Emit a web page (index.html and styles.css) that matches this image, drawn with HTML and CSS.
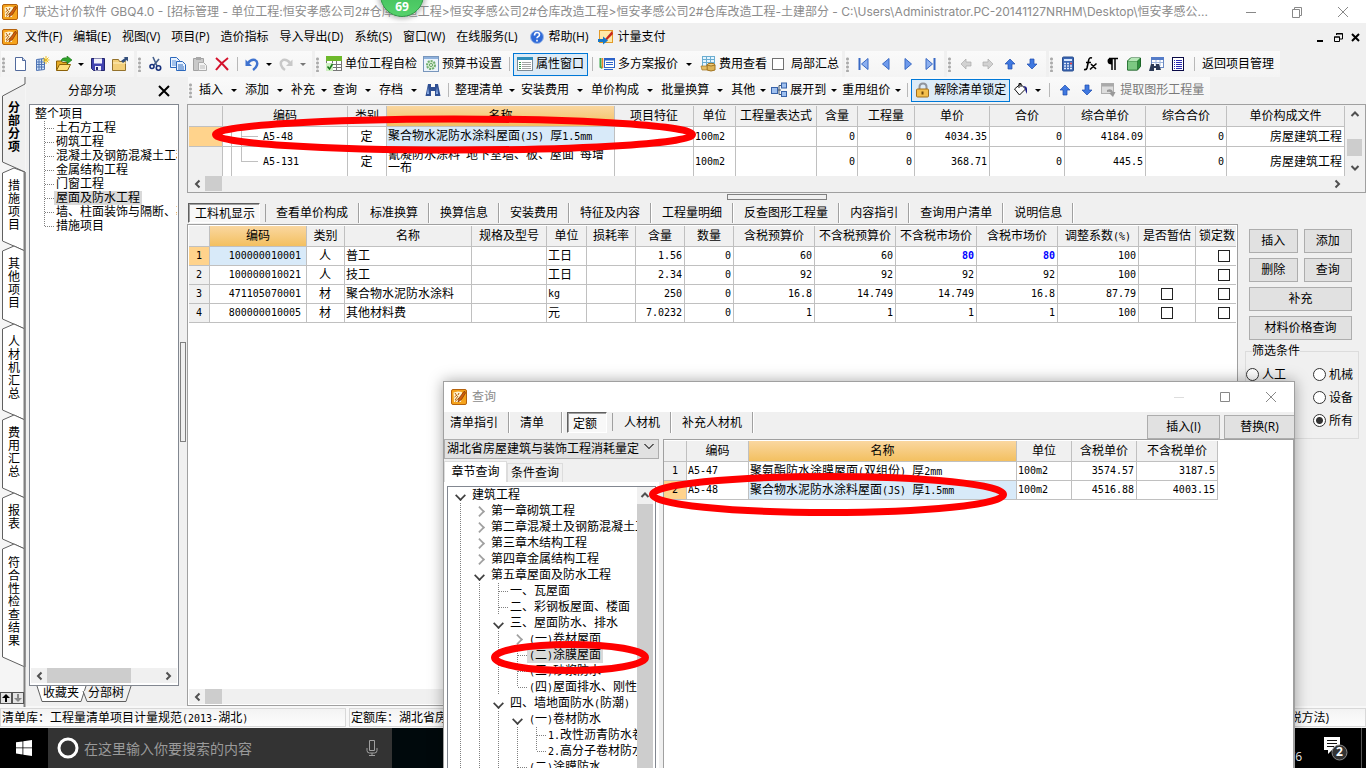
FILE: index.html
```html
<!DOCTYPE html>
<html lang="zh-CN">
<head>
<meta charset="utf-8">
<title>广联达计价软件 GBQ4.0</title>
<link rel="stylesheet" href="styles.css">
</head>
<body>
<svg class="defs" aria-hidden="true">
  <symbol id="app" viewBox="0 0 16 16"><rect x="0.5" y="0.5" width="15" height="15" rx="1.5" fill="#f5a31c" stroke="#b5620c"/><path d="M2.500 3.500L7 2.500l4 .5-1 10H3z" fill="#fff3d0"/><path d="M4 4l2 3M3.500 8L6 6M4 11l3-4M8 4l-1 2M4 12.500L8 9" stroke="#b5620c" stroke-width="1"/><path d="M13.500 2L8 9l-1 4 3.500-2.500L14.500 4z" fill="#d2600c" stroke="#7c3206" stroke-width="0.7"/></symbol>
  <symbol id="up" viewBox="0 0 16 16"><path d="M8 3l5 5H10v5H6V8H3z" fill="#3f78e0" stroke="#1d4cae" stroke-width="0.7"/></symbol>
  <symbol id="down" viewBox="0 0 16 16"><path d="M8 13l5-5H10V3H6v5H3z" fill="#3f78e0" stroke="#1d4cae" stroke-width="0.7"/></symbol>
  <symbol id="left" viewBox="0 0 16 16"><path d="M10.500 4.500L7 8l3.500 3.500" fill="none" stroke="#505050" stroke-width="2"/></symbol>
  <symbol id="right" viewBox="0 0 16 16"><path d="M5.500 4.500L9 8l-3.500 3.500" fill="none" stroke="#505050" stroke-width="2"/></symbol>
  <symbol id="vup" viewBox="0 0 16 16"><path d="M4.500 10L8 6.500l3.500 3.500" fill="none" stroke="#505050" stroke-width="2"/></symbol>
  <symbol id="vdown" viewBox="0 0 16 16"><path d="M4.500 6L8 9.500 11.500 6" fill="none" stroke="#505050" stroke-width="2"/></symbol>
</svg>

<header class="titlebar">
  <svg class="ic"><use href="#app"/></svg>
  <h1>广联达计价软件 GBQ4.0 - [招标管理 - 单位工程:恒安孝感公司2#仓库改造工程&gt;恒安孝感公司2#仓库改造工程&gt;恒安孝感公司2#仓库改造工程-土建部分 - C:\Users\Administrator.PC-20141127NRHM\Desktop\恒安孝感公...</h1>
  <div class="winbtns">
    <button aria-label="最小化"><svg class="ic" viewBox="0 0 16 16"><path d="M3 8.500h10" stroke="#888"/></svg></button>
    <button aria-label="还原"><svg class="ic" viewBox="0 0 16 16"><path d="M3.500 5.500h7v8h-7zM5.500 5.500v-2h7v8h-2" fill="none" stroke="#888"/></svg></button>
    <button aria-label="关闭"><svg class="ic" viewBox="0 0 16 16"><path d="M3 3l10 10M13 3L3 13" stroke="#888"/></svg></button>
  </div>
</header>

<nav class="menubar">
  <svg class="ic"><use href="#app"/></svg>
  <button>文件(F)</button><button>编辑(E)</button><button>视图(V)</button><button>项目(P)</button><button>造价指标</button><button>导入导出(D)</button><button>系统(S)</button><button>窗口(W)</button><button>在线服务(L)</button>
  <button class="lead"><svg class="ic" viewBox="0 0 16 16"><circle cx="8" cy="8" r="6.500" fill="#2f6ad8" stroke="#9db9e8"/><path d="M5.500 6.500q0-3 2.500-3t2.500 2.200q0 1.300-1.500 2-1 .5-1 1.600M8 10.800v1.800" fill="none" stroke="#fff" stroke-width="1.600"/></svg>帮助(H)</button>
  <button class="lead"><svg class="ic" viewBox="0 0 16 16"><rect x="1.500" y="1.500" width="13" height="12" fill="#ffe9a8" stroke="#e29a28"/><path d="M14 2L8 9l-2 3 3-1 6-6z" fill="#c8281c"/><path d="M0 10h5V7.500l5 4-5 4V13H0z" fill="#1878c8"/></svg>计量支付</button>
  <div class="mdi">
    <button aria-label="最小化子窗口"><svg class="ic" viewBox="0 0 16 16"><path d="M5 12h6" stroke="#000" stroke-width="2"/></svg></button>
    <button aria-label="还原子窗口"><svg class="ic" viewBox="0 0 16 16"><path d="M4.500 8v4.500h5V8zM6.500 6V4.500h6V10H10M4 8h6M6 5h7" fill="none" stroke="#000"/></svg></button>
    <button aria-label="关闭子窗口"><svg class="ic" viewBox="0 0 16 16"><path d="M4 5l7 7M11 5l-7 7" stroke="#000" stroke-width="2"/></svg></button>
  </div>
</nav>

<div class="toolrow">
  <div class="group">
    <i class="grip"></i>
    <button class="tb" aria-label="新建"><svg class="ic" viewBox="0 0 16 16"><path d="M3.500 1.500h7l3 3v10h-10z" fill="#fff" stroke="#526a9c"/><path d="M10.500 1.500v3h3" fill="#c7d8f2" stroke="#526a9c"/></svg></button>
    <button class="tb" aria-label="新建项目"><svg class="ic" viewBox="0 0 16 16"><path d="M2.500 3.500l8-1v11l-8 1z" fill="#cfe3fa" stroke="#4f74b4"/><path d="M3 6h7M3 8.500h7M3 11h7M5 3v11M7.500 3v11" stroke="#4f74b4"/><path d="M12 0v8M8.500 4h7M9.500 1.500l5 5M14.500 1.500l-5 5" stroke="#eec01c"/></svg></button>
    <button class="tb" aria-label="打开"><svg class="ic" viewBox="0 0 16 16"><path d="M.5 14V5h5l1 1.500h5V14z" fill="#e5ab26" stroke="#8c6108"/><path d="M.5 14.500L3.500 8.500h11l-3 6z" fill="#ffdf7a" stroke="#8c6108"/><path d="M5 5q1-4 6-3V0l5 4-5 4V5.500q-4-1-6-.5z" fill="#31a52c" stroke="#187016" stroke-width=".6"/></svg></button>
    <i class="caret"></i>
    <button class="tb" aria-label="保存"><svg class="ic" viewBox="0 0 16 16"><path d="M1.500 2.500h13v12h-11l-2-2z" fill="#4244b0" stroke="#22246c"/><path d="M4 2.500h8v5H4zM5 10h6v4.500H5z" fill="#f2f2fb"/><path d="M6 11h2v3H6z" fill="#22246c"/></svg></button>
    <button class="tb" aria-label="文件夹"><svg class="ic" viewBox="0 0 16 16"><path d="M.5 14.500V3.500h6l1 2h6v9z" fill="#f2cf7a" stroke="#94722c"/><path d="M1 7h13" stroke="#fff0c0"/><path d="M9 5l4-3-1.500-1H16v4.500L14.500 4 11 7z" fill="#34507c"/></svg></button>
  </div>
  <div class="group">
    <i class="grip"></i>
    <button class="tb" aria-label="剪切"><svg class="ic" viewBox="0 0 16 16"><path d="M5 1l4 9M11 3l-5 6" stroke="#46608c" stroke-width="1.600"/><circle cx="4" cy="10.500" r="2" fill="none" stroke="#16307c" stroke-width="1.600"/><circle cx="10.500" cy="12" r="2.200" fill="none" stroke="#16307c" stroke-width="1.600"/></svg></button>
    <button class="tb" aria-label="复制"><svg class="ic" viewBox="0 0 16 16"><path d="M.5 1.500h6l3 3v7h-9z" fill="#e8f2ff" stroke="#2c68bc"/><path d="M2 5h4M2 7h4M2 9h4" stroke="#5d92d8"/><path d="M6.500 5.500h6l3 3v6h-9z" fill="#e8f2ff" stroke="#2c68bc"/><path d="M8 9h5M8 11h6M8 13h6" stroke="#2c68bc"/></svg></button>
    <button class="tb" aria-label="粘贴"><svg class="ic" viewBox="0 0 16 16"><path d="M1.500 2.500h10v12h-10z" fill="#c9c9c9" stroke="#a2a2a2"/><path d="M4 1h5v3H4z" fill="#a8a8a8"/><path d="M6.500 6.500h5l3 3v5h-8z" fill="#f3f3f3" stroke="#acacac"/><path d="M8 10h5M8 12h5" stroke="#bbb"/></svg></button>
    <button class="tb" aria-label="删除"><svg class="ic" viewBox="0 0 16 16"><path d="M2 2q6 5 12 12M14 2Q7 7 2 14" fill="none" stroke="#d4122c" stroke-width="2"/></svg></button>
    <i class="sep"></i>
    <button class="tb" aria-label="撤销"><svg class="ic" viewBox="0 0 16 16"><path d="M4 7q3-4 7-3 3 1.500 2 5-1 3-4 5" fill="none" stroke="#3f73cf" stroke-width="2.400"/><path d="M1.500 3.500V10H8z" fill="#3f73cf"/></svg></button>
    <i class="caret"></i>
    <button class="tb" aria-label="重做"><svg class="ic" viewBox="0 0 16 16"><path d="M12 7Q9 3 5 4 2 5.500 3 9q1 3 4 5" fill="none" stroke="#c8c8c8" stroke-width="2.400"/><path d="M14.500 3.500V10H8z" fill="#c8c8c8"/></svg></button>
    <i class="caret dim"></i>
  </div>
  <div class="group">
    <i class="grip"></i>
    <button class="tb txt"><svg class="ic" viewBox="0 0 16 16"><rect x=".5" y="1.500" width="15" height="13" fill="#fff" stroke="#777"/><rect width="16" height="5" fill="#6eb92b"/><path d="M1 8.500h14M1 11.500h14M6.500 5v9M10.500 5v9" stroke="#777"/><path d="M0 7h7v8H0z" fill="#cdeec0"/><path d="M1.500 10.500l2 2.500 3-5" fill="none" stroke="#167a18" stroke-width="1.500"/></svg>单位工程自检</button>
    <button class="tb txt"><svg class="ic" viewBox="0 0 16 16"><rect x=".5" y=".5" width="15" height="15" fill="#ecf3fb" stroke="#7896bc"/><path d="M1 2h14" stroke="#8eb1dc" stroke-width="2"/><circle cx="8" cy="9" r="4" fill="#d5ecd0" stroke="#6fae6f" stroke-width="2" stroke-dasharray="2 1"/><circle cx="8" cy="9" r="1.500" fill="#fff" stroke="#5c9e5c"/></svg>预算书设置</button>
    <i class="sep"></i>
    <button class="tb txt on"><svg class="ic" viewBox="0 0 16 16"><rect x=".5" y="1.500" width="15" height="13" fill="#fff" stroke="#7a8a96"/><rect y="1" width="16" height="3" fill="#2e8dbb"/><path d="M2 6.500h2M2 8.500h2M2 10.500h2M2 12.500h2" stroke="#39964d"/><path d="M5 6.500h9M5 8.500h9M5 10.500h9M5 12.500h9" stroke="#a3a3a3"/></svg>属性窗口</button>
    <i class="sep"></i>
    <button class="tb txt"><svg class="ic" viewBox="0 0 16 16"><path d="M1.500 2v9l2 1" fill="none" stroke="#3aa84a" stroke-width="2"/><path d="M3.500 2v10" stroke="#e9852c" stroke-width="1.500"/><rect x="5.500" y="2.500" width="10" height="9" fill="#fff" stroke="#2c62c8"/><path d="M5.500 3.500h10" stroke="#2c62c8" stroke-width="2"/><path d="M7 6.500h7M7 8.500h7M5 13.500h9" stroke="#2c62c8"/></svg>多方案报价</button>
    <i class="caret wide"></i>
    <button class="tb txt"><svg class="ic" viewBox="0 0 16 16"><rect x="2.500" y=".5" width="12" height="10" fill="#e5f5ff" stroke="#6badd0"/><path d="M3 3.500h11M3 6.500h11M6.500 1v9M10.500 1v9" stroke="#6badd0"/><ellipse cx="11" cy="9" rx="4" ry="1.700" fill="#f1cf7e" stroke="#a27420"/><path d="M7 9v5q4 2 8 0V9q-4 2-8 0" fill="#ddb457" stroke="#a27420"/><path d="M1 10h6v4H2z" fill="#e4bd65" stroke="#a27420" stroke-width=".7"/></svg>费用查看</button>
    <label class="chk"><input type="checkbox">局部汇总</label>
  </div>
  <div class="group">
    <i class="grip"></i>
    <button class="tb" aria-label="首条"><svg class="ic" viewBox="0 0 16 16"><path d="M3.500 2v12" stroke="#3869c4" stroke-width="2"/><path d="M12 2.500v11L5.500 8z" fill="#8db0ef" stroke="#3869c4"/></svg></button>
    <button class="tb" aria-label="上一条"><svg class="ic" viewBox="0 0 16 16"><path d="M11 2.500v11L4.500 8z" fill="#6f9bec" stroke="#3869c4"/></svg></button>
    <button class="tb" aria-label="下一条"><svg class="ic" viewBox="0 0 16 16"><path d="M5 2.500v11L11.500 8z" fill="#6f9bec" stroke="#3869c4"/></svg></button>
    <button class="tb" aria-label="末条"><svg class="ic" viewBox="0 0 16 16"><path d="M12.500 2v12" stroke="#3869c4" stroke-width="2"/><path d="M4 2.500v11L10.500 8z" fill="#8db0ef" stroke="#3869c4"/></svg></button>
  </div>
  <div class="group">
    <i class="grip"></i>
    <button class="tb" aria-label="左移"><svg class="ic" viewBox="0 0 16 16"><path d="M3 8l5-5v3h5v4H8v3z" fill="#d2d2d2" stroke="#aaa" stroke-width=".7"/></svg></button>
    <button class="tb" aria-label="右移"><svg class="ic" viewBox="0 0 16 16"><path d="M13 8L8 3v3H3v4h5v3z" fill="#d2d2d2" stroke="#aaa" stroke-width=".7"/></svg></button>
    <button class="tb" aria-label="上移"><svg class="ic"><use href="#up"/></svg></button>
    <button class="tb" aria-label="下移"><svg class="ic"><use href="#down"/></svg></button>
  </div>
  <div class="group">
    <i class="grip"></i>
    <button class="tb" aria-label="计算器"><svg class="ic" viewBox="0 0 16 16"><rect x="2.500" y="1" width="11" height="14" rx="1" fill="#3c67b4" stroke="#294e90"/><path d="M4 4h8" stroke="#d7e8ff" stroke-width="2"/><path d="M4 7.500h8M4 10h8M4 12.500h8" stroke="#dfe9fa" stroke-width="1.500" stroke-dasharray="2 1"/><path d="M10 7.500h2" stroke="#e44" stroke-width="1.500"/></svg></button>
    <button class="tb" aria-label="函数"><svg class="ic" viewBox="0 0 16 16"><path d="M10 2q-3-1-3.500 3L5 12q-.5 2-3 1.500M4 6.500h5M9 8l5 5M14.500 7.500L8 13.500" fill="none" stroke="#000" stroke-width="1.600"/></svg></button>
    <button class="tb" aria-label="段落"><svg class="ic" viewBox="0 0 16 16"><path d="M8 2v12M11 2v12M5 2.500h9" stroke="#000" stroke-width="1.500"/><path d="M8 2Q3.500 1.500 3.500 5T8 8.500z"/></svg></button>
    <button class="tb" aria-label="三维"><svg class="ic" viewBox="0 0 16 16"><path d="M1.500 5l3-3h10v8.500l-3 3.500h-10z" fill="#2e8f3c" stroke="#1b6426"/><path d="M1.500 5h10v9h-10z" fill="#7cc882" stroke="#1b6426" stroke-width=".6"/><path d="M2 5l3-3h9l-3 3z" fill="#b7e6b8"/></svg></button>
    <button class="tb" aria-label="查找表"><svg class="ic" viewBox="0 0 16 16"><rect x="3.500" y="1.500" width="12" height="10" fill="#fff" stroke="#6a89c2"/><path d="M3 2.500h13" stroke="#557cc8" stroke-width="3"/><path d="M4 6.500h11M8 4v6M12 4v6" stroke="#a0b6dc"/><path d="M3 8h3v2h2V8h3l2 6H8v-2H6v3H1z" fill="#2c3a56"/></svg></button>
    <button class="tb" aria-label="清单"><svg class="ic" viewBox="0 0 16 16"><rect x="2.500" y="1.500" width="11" height="13" fill="#fff" stroke="#0a0a46"/><path d="M4 4.500h1M4 6.500h1M4 8.500h1M4 10.500h1M4 12.500h1M6 4.500h6M6 6.500h6M6 8.500h6M6 10.500h6M6 12.500h6" stroke="#2a2ab0"/></svg></button>
    <i class="sep wide"></i>
    <button class="tb txt">返回项目管理</button>
  </div>
</div>

<div class="main">
  <nav class="vtabs">
    <svg class="vline" viewBox="0 0 26 630" aria-hidden="true">
      <path d="M24.500 0V7L2.500 19V85L24.500 95V629H0V0z" fill="#f5f5f5"/>
      <g fill="#fff" stroke="#606060">
        <path d="M25 95L14 91 2.500 96V164L25 174z"/><path d="M25 174L14 169 2.500 174V242L25 252z"/><path d="M25 252L14 247 2.500 252V333L25 343z"/><path d="M25 343L14 338 2.500 343V411L25 421z"/><path d="M25 421L14 416 2.500 421V462L25 472z"/><path d="M25 472L14 467 2.500 472V580L25 590z"/>
      </g>
      <path d="M25 0V7L2.500 19V85L25 95" fill="#f0f0f0" stroke="#606060"/>
      <path d="M24.500 95V630" stroke="#808080" stroke-width="2"/>
    </svg>
    <button class="cur">分<br>部<br>分<br>项</button>
    <button>措<br>施<br>项<br>目</button>
    <button>其<br>他<br>项<br>目</button>
    <button>人<br>材<br>机<br>汇<br>总</button>
    <button>费<br>用<br>汇<br>总</button>
    <button>报<br>表</button>
    <button>符<br>合<br>性<br>检<br>查<br>结<br>果</button>
    <div class="vscr">
      <button aria-label="上"><svg viewBox="0 0 10 10"><path d="M5 1l4 4H6v4H4V5H1z" fill="#000"/></svg></button>
      <button aria-label="下"><svg viewBox="0 0 10 10"><path d="M5 9l4-4H6V1H4v4H1z" fill="#888"/></svg></button>
    </div>
  </nav>

  <aside class="side">
    <div class="sidehead"><h2>分部分项</h2><button aria-label="关闭面板"><svg class="ic" viewBox="0 0 16 16"><path d="M3 3l10 10M13 3L3 13" stroke="#000" stroke-width="2"/></svg></button></div>
    <div class="treebox">
      <ul class="tree small">
        <li>整个项目</li>
        <li><i class="br"></i><span>土石方工程</span></li>
        <li><i class="br"></i><span>砌筑工程</span></li>
        <li><i class="br"></i><span>混凝土及钢筋混凝土工程</span></li>
        <li><i class="br"></i><span>金属结构工程</span></li>
        <li><i class="br"></i><span>门窗工程</span></li>
        <li><i class="br"></i><span class="sel">屋面及防水工程</span></li>
        <li><i class="br"></i><span>墙、柱面装饰与隔断、幕墙</span></li>
        <li><i class="br end"></i><span>措施项目</span></li>
      </ul>
      <div class="hscroll"><svg class="ic"><use href="#left"/></svg><i class="thumb long"></i><svg class="ic"><use href="#right"/></svg></div>
    </div>
    <div class="btabs">
      <svg viewBox="0 0 110 17" aria-hidden="true"><path d="M8 0l5 15.500H52L57 0" fill="#fff" stroke="#606060"/><path d="M54 5l4 10.500H97L102 0" fill="#f0f0f0" stroke="#606060"/></svg>
      <button>收藏夹</button><button>分部树</button>
    </div>
  </aside>
  <div class="split"><i></i></div>

  <main class="work">
    <div class="toolrow">
      <div class="group">
        <i class="grip"></i>
        <button class="tb txt">插入</button><i class="caret wide"></i>
        <button class="tb txt">添加</button><i class="caret wide"></i>
        <button class="tb txt">补充</button><i class="caret"></i>
        <button class="tb txt">查询</button><i class="caret wide"></i>
        <button class="tb txt">存档</button><i class="caret wide"></i>
        <button class="tb" aria-label="查找"><svg class="ic" viewBox="0 0 16 16"><path d="M3 2h3v3h4V2h3l2.500 12h-5.500V9H6v5H.5z" fill="#2f4f92"/><path d="M3 5L2 12h2zM12 5l-1 7h2z" fill="#8fb2ea"/></svg></button>
        <i class="sep"></i>
        <button class="tb txt">整理清单</button><i class="caret"></i>
        <button class="tb txt">安装费用</button><i class="caret wide"></i>
        <button class="tb txt">单价构成</button><i class="caret wide"></i>
        <button class="tb txt">批量换算</button><i class="caret wide"></i>
        <button class="tb txt">其他</button><i class="caret slim"></i>
        <button class="tb txt"><svg class="ic" viewBox="0 0 16 16"><path d="M6 8h4M8 3.500v9M8 3.500h3M8 12.500h3" fill="none" stroke="#456"/><rect x=".5" y="5.500" width="6" height="6" fill="#9fc0ef" stroke="#3762a8"/><rect x="10.500" y="1" width="5" height="5" fill="#9fc0ef" stroke="#3762a8"/><rect x="10.500" y="9.500" width="5" height="5" fill="#9fc0ef" stroke="#3762a8"/></svg>展开到</button><i class="caret slim"></i>
        <button class="tb txt">重用组价</button><i class="caret slim"></i>
        <i class="sep"></i>
        <button class="tb txt on"><svg class="ic" viewBox="0 0 16 16"><path d="M4.500 8V5q0-3.500 3.500-3.500T11.500 5v3" fill="none" stroke="#8f949c" stroke-width="2"/><rect x="1.500" y="7" width="12" height="8" rx="1" fill="#f4bf4c" stroke="#a2701c"/><path d="M7.500 9.500v3" stroke="#6d4609" stroke-width="2"/></svg>解除清单锁定</button>
        <button class="tb" aria-label="填充"><svg class="ic" viewBox="0 0 16 16"><path d="M1.500 7l6-5 5 5-6 6z" fill="#fff" stroke="#111"/><path d="M6 6V1.500h2V5" fill="none" stroke="#111"/><path d="M10 4q4 0 4 3v5q-2-3-2-6z" fill="#1c1c88"/></svg></button><i class="caret"></i>
        <i class="sep wide"></i>
        <button class="tb" aria-label="上移"><svg class="ic"><use href="#up"/></svg></button>
        <button class="tb" aria-label="下移"><svg class="ic"><use href="#down"/></svg></button>
        <button class="tb txt dim"><svg class="ic" viewBox="0 0 16 16"><rect x=".5" y="1.500" width="12" height="10" fill="#ddd" stroke="#b0b0b0"/><path d="M1 3h12" stroke="#aaa" stroke-width="3"/><path d="M6 8q5-2 6 2h2.500L12 15 8 11h2q-1-2-4-1z" fill="#999"/></svg>提取图形工程量</button>
      </div>
    </div>

    <section class="gridbox top">
      <div class="scrollpair">
        <table class="grid t1">
          <colgroup><col><col><col><col><col><col><col><col><col><col><col><col><col><col></colgroup>
          <thead><tr><th></th><th>编码</th><th>类别</th><th class="hot">名称</th><th>项目特征</th><th>单位</th><th>工程量表达式</th><th>含量</th><th>工程量</th><th>单价</th><th>合价</th><th>综合单价</th><th>综合合价</th><th>单价构成文件</th></tr></thead>
          <tbody>
            <tr><th class="cur"></th><td class="m code">A5-48</td><td class="c">定</td><td class="pick">聚合物水泥防水涂料屋面<span class="m">(JS) </span>厚<span class="m">1.5mm</span></td><td></td><td class="m">100m2</td><td></td><td class="m r">0</td><td class="m r">0</td><td class="m r">4034.35</td><td class="m r">0</td><td class="m r">4184.09</td><td class="m r">0</td><td class="r">房屋建筑工程</td></tr>
            <tr class="tall"><th></th><td class="m code end">A5-131</td><td class="c">定</td><td>氰凝防水涂料<span class="m"> </span>地下室墙、板、屋面<span class="m"> </span>每增一布</td><td></td><td class="m">100m2</td><td></td><td class="m r">0</td><td class="m r">0</td><td class="m r">368.71</td><td class="m r">0</td><td class="m r">445.5</td><td class="m r">0</td><td class="r">房屋建筑工程</td></tr>
          </tbody>
        </table>
        <div class="vscroll"><svg class="ic"><use href="#vup"/></svg><i></i><svg class="ic"><use href="#vdown"/></svg></div>
      </div>
      <div class="hscroll far"><svg class="ic"><use href="#left"/></svg><i class="thumb"></i><svg class="ic"><use href="#right"/></svg></div>
    </section>

    <div class="hsplit"><i></i></div>
    <div class="tabs">
      <button class="cur">工料机显示</button><button>查看单价构成</button><button>标准换算</button><button>换算信息</button><button>安装费用</button><button>特征及内容</button><button>工程量明细</button><button>反查图形工程量</button><button>内容指引</button><button>查询用户清单</button><button>说明信息</button>
    </div>

    <div class="lower">
      <section class="gridbox fill">
        <div class="clip">
        <table class="grid t2">
          <colgroup><col><col><col><col><col><col><col><col><col><col><col><col><col><col><col><col></colgroup>
          <thead><tr><th></th><th class="hot">编码</th><th>类别</th><th>名称</th><th>规格及型号</th><th>单位</th><th>损耗率</th><th>含量</th><th>数量</th><th>含税预算价</th><th>不含税预算价</th><th>不含税市场价</th><th>含税市场价</th><th>调整系数<span class="m">(%)</span></th><th>是否暂估</th><th class="cut">锁定数</th></tr></thead>
          <tbody>
            <tr><th class="m cur">1</th><td class="m r pick id">100000010001</td><td class="c">人</td><td>普工</td><td></td><td>工日</td><td></td><td class="m r">1.56</td><td class="m r">0</td><td class="m r">60</td><td class="m r">60</td><td class="m r blue">80</td><td class="m r blue">80</td><td class="m r">100</td><td></td><td class="c"><input type="checkbox" aria-label="锁定数量 1"></td></tr>
            <tr><th class="m">2</th><td class="m r id">100000010021</td><td class="c">人</td><td>技工</td><td></td><td>工日</td><td></td><td class="m r">2.34</td><td class="m r">0</td><td class="m r">92</td><td class="m r">92</td><td class="m r">92</td><td class="m r">92</td><td class="m r">100</td><td></td><td class="c"><input type="checkbox" aria-label="锁定数量 2"></td></tr>
            <tr><th class="m">3</th><td class="m r id">471105070001</td><td class="c">材</td><td>聚合物水泥防水涂料</td><td></td><td class="m">kg</td><td></td><td class="m r">250</td><td class="m r">0</td><td class="m r">16.8</td><td class="m r">14.749</td><td class="m r">14.749</td><td class="m r">16.8</td><td class="m r">87.79</td><td class="c"><input type="checkbox" aria-label="是否暂估 3"></td><td class="c"><input type="checkbox" aria-label="锁定数量 3"></td></tr>
            <tr><th class="m">4</th><td class="m r id">800000010005</td><td class="c">材</td><td>其他材料费</td><td></td><td>元</td><td></td><td class="m r">7.0232</td><td class="m r">0</td><td class="m r">1</td><td class="m r">1</td><td class="m r">1</td><td class="m r">1</td><td class="m r">100</td><td class="c"><input type="checkbox" aria-label="是否暂估 4"></td><td class="c"><input type="checkbox" aria-label="锁定数量 4"></td></tr>
          </tbody>
        </table>
        </div>
        <div class="hscroll"><svg class="ic"><use href="#left"/></svg><i class="thumb"></i></div>
      </section>
      <aside class="actions">
        <div class="btns"><button>插入</button><button>添加</button><button>删除</button><button>查询</button><button class="full">补充</button><button class="full">材料价格查询</button></div>
        <fieldset>
          <legend>筛选条件</legend>
          <label><input type="radio" name="f">人工</label><label><input type="radio" name="f">机械</label>
          <label><input type="radio" name="f">材料</label><label><input type="radio" name="f">设备</label>
          <label><input type="radio" name="f">主材</label><label><input type="radio" name="f" checked>所有</label>
        </fieldset>
      </aside>
    </div>
  </main>
</div>

<footer class="status">
  <div>清单库：工程量清单项目计量规范<span class="m">(2013-</span>湖北<span class="m">)</span></div>
  <div class="grow"><span>定额库：湖北省房屋建筑与装饰工程</span><span>(简易计税方法)</span></div>
</footer>

<div class="taskbar">
  <button class="start" aria-label="开始"><svg class="ic" viewBox="0 0 16 16"><path d="M0 2.300l6.500-.9v6.100H0zM7.300 1.300L16 0v7.500H7.300zM0 8.300h6.500v6.200L0 13.600zM7.300 8.300H16V16l-8.700-1.300z" fill="#fff"/></svg></button>
  <div class="search">
    <svg class="ring" viewBox="0 0 22 22"><circle cx="11" cy="11" r="9" fill="none" stroke="#fff" stroke-width="3"/></svg>
    <input type="text" placeholder="在这里输入你要搜索的内容" aria-label="搜索">
    <svg class="ic" viewBox="0 0 16 16"><path d="M5.500.5h5v10h-5zM3 8v2.500q0 2.500 2.500 2.500h5q2.500 0 2.500-2.500V8M8 13v2.500M5 15.500h6" fill="none" stroke="#a0a0a0"/></svg>
  </div>
  <div class="tray"><span>2017/6/6</span>
    <button aria-label="通知"><svg viewBox="0 0 26 26"><path d="M1 2h16v13H9l-4 4v-4H1z" fill="#fff"/><path d="M4 5.500h10M4 8.500h10M4 11.500h7" stroke="#111"/><circle cx="16.500" cy="17.500" r="7.500" fill="#333" stroke="#888"/></svg><b>2</b></button>
  </div>
</div>

<section class="dialog" role="dialog" aria-label="查询">
  <div class="dtitle"><svg class="ic"><use href="#app"/></svg><h2>查询</h2>
    <div class="winbtns">
      <button aria-label="最小化"><svg class="ic" viewBox="0 0 16 16"><path d="M3 8.500h10" stroke="#ddd"/></svg></button>
      <button aria-label="最大化"><svg class="ic" viewBox="0 0 16 16"><path d="M3.500 3.500h9v9h-9z" fill="none" stroke="#888"/></svg></button>
      <button aria-label="关闭"><svg class="ic" viewBox="0 0 16 16"><path d="M3 3l10 10M13 3L3 13" stroke="#888"/></svg></button>
    </div>
  </div>
  <div class="dbar">
    <div class="tabs"><button>清单指引</button><button class="roomy">清单</button><button class="cur">定额</button><button>人材机</button><button>补充人材机</button></div>
    <div class="dact"><button>插入(I)</button><button>替换(R)</button></div>
  </div>
  <div class="dbody">
    <div class="dleft">
      <select aria-label="定额库"><option>湖北省房屋建筑与装饰工程消耗量定</option></select>
      <div class="ptabs"><button class="cur">章节查询</button><button>条件查询</button></div>
      <div class="page">
        <div class="dtree">
          <ul class="tree">
            <li><i class="open"></i><span>建筑工程</span></li>
            <li><i class="v"></i><i class="shut"></i><span>第一章砌筑工程</span></li>
            <li><i class="v"></i><i class="shut"></i><span>第二章混凝土及钢筋混凝土工程</span></li>
            <li><i class="v"></i><i class="shut"></i><span>第三章木结构工程</span></li>
            <li><i class="v"></i><i class="shut"></i><span>第四章金属结构工程</span></li>
            <li><i class="v"></i><i class="open"></i><span>第五章屋面及防水工程</span></li>
            <li><i class="v"></i><i class="v"></i><i class="br"></i><span>一、瓦屋面</span></li>
            <li><i class="v"></i><i class="v"></i><i class="br"></i><span>二、彩钢板屋面、楼面</span></li>
            <li><i class="v"></i><i class="v"></i><i class="open"></i><span>三、屋面防水、排水</span></li>
            <li><i class="v"></i><i class="v"></i><i class="v"></i><i class="shut"></i><span><b class="m">(</b>一<b class="m">)</b>卷材屋面</span></li>
            <li><i class="v"></i><i class="v"></i><i class="v"></i><i class="br"></i><span class="sel"><b class="m">(</b>二<b class="m">)</b>涂膜屋面</span></li>
            <li><i class="v"></i><i class="v"></i><i class="v"></i><i class="br"></i><span><b class="m">(</b>三<b class="m">)</b>砂浆防水</span></li>
            <li><i class="v"></i><i class="v"></i><i class="v"></i><i class="br end"></i><span><b class="m">(</b>四<b class="m">)</b>屋面排水、刚性屋面</span></li>
            <li><i class="v"></i><i class="v"></i><i class="open"></i><span>四、墙地面防水<b class="m">(</b>防潮<b class="m">)</b></span></li>
            <li><i class="v"></i><i class="v"></i><i class="v"></i><i class="open"></i><span><b class="m">(</b>一<b class="m">)</b>卷材防水</span></li>
            <li><i class="v"></i><i class="v"></i><i class="v"></i><i class="v"></i><i class="br"></i><span><b class="m">1.</b>改性沥青防水卷材</span></li>
            <li><i class="v"></i><i class="v"></i><i class="v"></i><i class="v"></i><i class="br end"></i><span><b class="m">2.</b>高分子卷材防水</span></li>
            <li><i class="v"></i><i class="v"></i><i class="v"></i><i class="br"></i><span><b class="m">(</b>二<b class="m">)</b>涂膜防水</span></li>
          </ul>
          <div class="vscroll solid"><svg class="ic"><use href="#vup"/></svg></div>
        </div>
      </div>
    </div>
    <div class="dright">
      <table class="grid t3">
        <colgroup><col><col><col><col><col><col></colgroup>
        <thead><tr><th></th><th>编码</th><th class="hot">名称</th><th>单位</th><th>含税单价</th><th>不含税单价</th></tr></thead>
        <tbody>
          <tr><th class="m">1</th><td class="m">A5-47</td><td>聚氨酯防水涂膜屋面<span class="m">(</span>双组份<span class="m">) </span>厚<span class="m">2mm</span></td><td class="m">100m2</td><td class="m r">3574.57</td><td class="m r">3187.5</td></tr>
          <tr><th class="m cur">2</th><td class="m">A5-48</td><td class="pick">聚合物水泥防水涂料屋面<span class="m">(JS) </span>厚<span class="m">1.5mm</span></td><td class="m">100m2</td><td class="m r">4516.88</td><td class="m r">4003.15</td></tr>
        </tbody>
      </table>
    </div>
  </div>
</section>

<div class="badge">69</div>
<svg class="marks" viewBox="0 0 1366 768" aria-hidden="true"><g fill="none" stroke="#f00" stroke-width="7"><ellipse cx="454" cy="134.500" rx="238.500" ry="15.500"/><ellipse cx="828" cy="494.500" rx="175.500" ry="18"/><ellipse cx="570" cy="657.500" rx="75.500" ry="13"/></g></svg>
</body>
</html>
```
FILE: styles.css
```css
* { box-sizing: border-box; }
body {
  margin: 0;
  height: 100vh;
  display: flex;
  flex-direction: column;
  overflow: hidden;
  position: relative;
  background: #f0f0f0;
  color: #000;
  font: 12px/14px "Open Sans", "Noto Sans CJK SC", sans-serif;
}
button, input, select { font: inherit; color: inherit; }
button { padding: 0; border: 0; background: none; white-space: nowrap; }
h1, h2 { margin: 0; font-size: 12px; font-weight: 400; white-space: nowrap; }
.defs { position: absolute; width: 0; height: 0; }
.ic { width: 16px; height: 16px; flex: none; display: block; }
.m { font-family: "DejaVu Sans Mono", "Liberation Mono", monospace; font-size: 10px; font-weight: 400; white-space: pre; }

/* title and menu */
.titlebar { height: 23px; flex: none; display: flex; align-items: center; background: #fff; color: #8c8c8c; padding-left: 2px; gap: 5px; }
.titlebar h1 { flex: 1; overflow: hidden; font-family: Inter, "Noto Sans CJK SC", sans-serif; }
.winbtns { display: flex; }
.winbtns button { width: 46px; display: flex; justify-content: center; }
.menubar { height: 28px; flex: none; display: flex; align-items: center; padding: 0 2px; gap: 11px; }
.menubar > .ic { margin-right: -4px; }
.menubar .lead { display: flex; align-items: center; gap: 4px; margin-right: -2px; }
.mdi { margin-left: auto; display: flex; gap: 2px; }

/* toolbars */
.toolrow { height: 26px; flex: none; display: flex; gap: 3px; padding-left: 1px; }
.group { display: flex; align-items: center; background: linear-gradient(#fafafa, #f4f4f4); padding-right: 3px; }
.grip { width: 8px; height: 15px; flex: none; background: radial-gradient(circle, #aaa 1px, transparent 2px) 0 0 / 5px 4px repeat-y; }
.tb { width: 22px; height: 23px; flex: none; display: flex; align-items: center; justify-content: center; }
.tb.txt { width: auto; padding: 0 3px; gap: 3px; }
.tb.on { border: 1px solid #0078d7; background: #dcebf7; }
.tb.dim { color: #7a7a7a; }
.sep { width: 8px; height: 14px; flex: none; background: linear-gradient(#b8b8b8, #b8b8b8) center / 1px 100% no-repeat; }
.sep.wide { width: 10px; }
.caret { width: 12px; flex: none; display: flex; justify-content: center; }
.caret.wide { width: 16px; }
.caret.slim { width: 10px; }
.caret::after { content: ""; border: 3px solid transparent; border-top-color: #000; border-bottom: 0; }
.caret.dim::after { border-top-color: #777; }
.chk { display: flex; align-items: center; gap: 7px; padding-left: 2px; }
input[type=checkbox] { appearance: none; margin: 0; width: 12px; height: 12px; background: #fff; border: 1px solid #707070; }

/* main frame */
.main { flex: 1; min-height: 0; display: flex; }
.vtabs { width: 26px; flex: none; position: relative; display: flex; flex-direction: column; background: #f5f5f5; }
.vline { position: absolute; left: 0; top: 0; width: 26px; height: 630px; }
.vtabs > button { position: relative; padding: 17px 0 9px 2px; line-height: 13px; }
.vtabs > .cur { font-weight: 700; padding: 24px 0 9px 2px; }
.vscr { position: relative; margin-top: auto; display: flex; padding-bottom: 2px; }
.vscr button { width: 12px; height: 12px; border: 1px solid #555; background: #e4e4e4; }
.vscr svg { display: block; width: 10px; height: 10px; }
.side { width: 150px; flex: none; margin-left: 3px; display: flex; flex-direction: column; }
.sidehead { height: 27px; flex: none; display: flex; align-items: center; justify-content: flex-end; gap: 40px; padding-right: 7px; }
.treebox { flex: 1; min-height: 0; border: 1px solid #828790; background: #fff; padding: 2px 1px; display: flex; flex-direction: column; justify-content: space-between; overflow: hidden; }
.tree { list-style: none; margin: 0; padding: 0; overflow: hidden; }
.tree li { display: flex; height: 16px; line-height: 16px; white-space: nowrap; }
.tree span { padding: 0 2px; }
.tree.small li { height: 14px; line-height: 14px; padding-left: 4px; }
.tree .sel { background: #d9d9d9; }
.tree i { width: 19px; flex: none; }
.tree .v, .tree .br { background: repeating-linear-gradient(#808080 0 1px, transparent 1px 2px) 9px 0 / 1px 100% no-repeat; }
.tree .br { background: repeating-linear-gradient(#808080 0 1px, transparent 1px 2px) 9px 0 / 1px 100% no-repeat, repeating-linear-gradient(90deg, #808080 0 1px, transparent 1px 2px) 10px 50% / 9px 1px no-repeat; }
.tree .br.end { background-size: 1px 50%, 9px 1px; }
.tree .open, .tree .shut { display: flex; align-items: center; justify-content: center; }
.tree .open::after, .tree .shut::after { content: ""; width: 7px; height: 7px; border: solid #404040; border-width: 0 2px 2px 0; transform: rotate(45deg) scale(0.85); }
.tree .shut::after { border-color: #a0a0a0; transform: rotate(-45deg) scale(0.85); }
.hscroll { height: 15px; flex: none; display: flex; background: #f0f0f0; }
.thumb { width: 17px; background: #cdcdcd; }
.thumb.long { width: 84px; margin-right: auto; }
.far .thumb { margin-right: auto; }
.far { padding-right: 18px; }
.btabs { height: 20px; flex: none; position: relative; display: flex; gap: 9px; padding-left: 14px; align-items: flex-start; }
.btabs svg { position: absolute; left: 0; top: 0; width: 110px; height: 17px; }
.btabs button { position: relative; }
.split { width: 8px; flex: none; display: flex; align-items: center; justify-content: center; }
.split i { width: 6px; height: 100px; border: 1px solid #808080; background: #f0f0f0; }
.work { flex: 1; min-width: 0; display: flex; flex-direction: column; }

/* grids */
.gridbox { border: 1px solid #a0a0a0; padding: 1px; background: #fff; display: flex; flex-direction: column; min-width: 0; }
.gridbox.top { margin-top: 1px; flex: none; background: #f0f0f0; }
.gridbox.fill { flex: 1; justify-content: space-between; }
.clip { overflow: hidden; }
.scrollpair { display: flex; gap: 2px; }
.scrollpair table { flex: 1; min-width: 0; }
.grid { border-collapse: separate; border-spacing: 0; table-layout: fixed; background: #fff; }
.grid th, .grid td { border: solid #c0c0c0; border-width: 0 1px 1px 0; padding: 0 2px 0 1px; font-weight: 400; text-align: left; overflow: hidden; height: 19px; line-height: 12px; }
.grid td { white-space: nowrap; }
.grid th { background: #f0f0f0; text-align: center; padding: 0; white-space: nowrap; }
.grid thead th { height: 21px; }
.grid thead .hot { background: linear-gradient(#fad7a0, #f3c060); }
.grid tbody .cur { background: #ffd38c; }
.grid .pick { background: #d8eaf9; }
.grid .c { text-align: center; }
.grid .r { text-align: right; padding-right: 2px; }
.grid .id { padding-right: 5px; }
.grid .blue { color: #00f; font-weight: 700; }
.grid .cut { text-align: left; padding-left: 3px; }
.grid input { display: block; margin: 0 auto; border-color: #222; }
.t1 tbody td, .t1 tbody th { height: 20px; }
.t1 tbody .tall td, .t1 tbody .tall th { height: 29px; border-bottom: 0; white-space: normal; }
.t1 .code { padding-left: 40px; background: linear-gradient(#c0c0c0, #c0c0c0) 8px 0 / 1px 100% no-repeat, linear-gradient(#c0c0c0, #c0c0c0) 18px 0 / 1px 100% no-repeat, linear-gradient(#c0c0c0, #c0c0c0) 18px 50% / 17px 1px no-repeat; }
.t1 .end { background-size: 1px 100%, 1px 50%, 17px 1px; }
.t1 col:nth-child(1) { width: 34px; }
.t1 col:nth-child(2) { width: 125px; }
.t1 col:nth-child(3) { width: 39px; }
.t1 col:nth-child(4) { width: 228px; }
.t1 col:nth-child(5) { width: 79px; }
.t1 col:nth-child(6) { width: 42px; }
.t1 col:nth-child(7), .t1 col:nth-child(12), .t1 col:nth-child(13) { width: 81px; }
.t1 col:nth-child(8) { width: 41px; }
.t1 col:nth-child(9) { width: 57px; }
.t1 col:nth-child(10), .t1 col:nth-child(11) { width: 75px; }
.t2 { width: 1064px; }
.t2 col:nth-child(1) { width: 21px; }
.t2 col:nth-child(2) { width: 97px; }
.t2 col:nth-child(3) { width: 38px; }
.t2 col:nth-child(4) { width: 127px; }
.t2 col:nth-child(5) { width: 75px; }
.t2 col:nth-child(6) { width: 40px; }
.t2 col:nth-child(7), .t2 col:nth-child(8), .t2 col:nth-child(9) { width: 49px; }
.t2 col:nth-child(n+10) { width: 81px; }
.t2 col:nth-child(n+15) { width: 57px; }
.t3 { width: 554px; }
.t3 col:nth-child(1) { width: 23px; }
.t3 col:nth-child(2) { width: 62px; }
.t3 col:nth-child(3) { width: 268px; }
.t3 col:nth-child(4) { width: 55px; }
.t3 col:nth-child(5) { width: 65px; }
.t3 col:nth-child(6) { width: 81px; }
.vscroll { width: 17px; flex: none; display: flex; flex-direction: column; justify-content: space-between; background: #f0f0f0; }
.vscroll i { height: 17px; margin: 12px 2px 0 0; background: #cdcdcd; }
.vscroll.solid { width: 16px; background: linear-gradient(#f0f0f0 17px, #cdcdcd 17px); }

/* tab strips */
.hsplit { height: 8px; flex: none; display: flex; justify-content: center; align-items: center; }
.hsplit i { width: 100px; height: 6px; border: 1px solid #808080; }
.tabs { display: flex; align-items: center; padding-left: 1px; }
.work > .tabs { height: 23px; flex: none; }
.tabs button { height: 20px; padding: 0 10px; border-right: 1px solid #a0a0a0; box-shadow: 1px 0 #fff; margin-right: 1px; }
.tabs .cur { border: 1px solid; border-color: #606060 #fff #fff #606060; box-shadow: inset 1px 1px #a0a0a0; background: #f8f8f8; padding: 2px 4px 0 6px; margin-right: 6px; position: relative; }
.tabs .cur::after { content: ""; position: absolute; right: -7px; top: 0; height: 18px; border-left: 1px solid #a0a0a0; }

/* action column */
.lower { flex: 1; min-height: 0; display: flex; }
.actions { width: 128px; flex: none; padding: 5px 7px 0 7px; }
.btns { display: grid; grid-template-columns: 1fr 1fr; gap: 5px 6px; padding: 0 7px 0 4px; }
.btns button, .dact button { height: 24px; border: 1px solid #adadad; background: #e1e1e1; }
.btns .full { grid-column: span 2; }
fieldset { margin: 4px 0 0; padding: 9px 0 10px; border: 1px solid #dcdcdc; display: grid; grid-template-columns: 67px 1fr; row-gap: 8px; }
legend { padding: 0; margin-left: 6px; }
fieldset label { display: flex; align-items: center; gap: 3px; line-height: 15px; }
input[type=radio] { appearance: none; margin: 0; width: 13px; height: 13px; border: 1px solid #333; border-radius: 50%; background: #fff; }
input[type=radio]:checked { background: radial-gradient(circle, #333 3px, #fff 4px); }

/* status and task bar */
.status { height: 22px; flex: none; display: flex; gap: 3px; background: #f8f8f8; padding: 2px 0 1px; }
.status > div { width: 346px; border: 1px solid #d8d8d8; padding: 2px 1px; background: linear-gradient(#f3f3f3, #fdfdfd); white-space: nowrap; }
.status .grow { width: auto; flex: 1; display: flex; justify-content: space-between; padding-right: 36px; }
.taskbar { height: 40px; flex: none; display: flex; background: linear-gradient(90deg, #00090c 60%, #000 96%); }
.start { width: 48px; background: #000; display: flex; align-items: center; justify-content: center; }
.search { width: 344px; background: #333; display: flex; align-items: center; padding: 0 12px 0 9px; gap: 5px; }
.ring { width: 22px; height: 22px; flex: none; }
.search input { flex: 1; min-width: 0; border: 0; padding: 0; background: none; font-size: 14px; color: #fff; }
.search input::placeholder { color: #9a9a9a; opacity: 1; }
.tray { margin-left: auto; display: flex; align-items: center; gap: 21px; color: #fff; padding-right: 12px; margin-right: 4px; border-right: 1px solid #555; }
.tray span { margin-top: 18px; }
.tray button { position: relative; width: 26px; height: 26px; }
.tray svg { display: block; width: 26px; height: 26px; }
.tray b { position: absolute; left: 9px; top: 10px; width: 15px; text-align: center; }

/* query window */
.dialog { position: absolute; left: 443px; top: 381px; bottom: 0; width: 852px; display: flex; flex-direction: column; overflow: hidden; border: 1px solid #a0a0a0; border-bottom: 0; background: #f0f0f0; box-shadow: 0 0 14px rgba(0, 0, 0, 0.35); }
.dtitle { height: 30px; flex: none; display: flex; align-items: center; gap: 5px; background: #fff; color: #8c8c8c; padding-left: 7px; }
.dtitle .winbtns { margin-left: auto; }
.dbar { height: 27px; flex: none; display: flex; justify-content: space-between; overflow: hidden; }
.dbar .tabs { padding-left: 0; align-items: flex-start; }
.dbar .tabs button { padding: 0 10px 0 6px; height: 21px; }
.dbar .tabs button + button { padding-left: 10px; }
.dbar .tabs .roomy { padding-right: 17px; }
.dbar .tabs .cur { padding: 2px 9px 0 5px; margin-left: 4px; }
.dbar .tabs .cur + button { padding-left: 11px; }
.dact { display: flex; gap: 4px; padding-top: 3px; }
.dact button { width: 73px; }
.dact button:last-child { width: 70px; border-right: 0; }
.dbody { flex: 1; min-height: 0; display: flex; gap: 4px; }
.dleft { width: 215px; flex: none; display: flex; flex-direction: column; }
.dleft select { height: 20px; width: 100%; flex: none; appearance: none; border: 1px solid #adadad; padding: 0 18px 0 2px; background-color: #e1e1e1; background-image: linear-gradient(45deg, transparent 7px, #606060 7px 8px, transparent 8px), linear-gradient(-45deg, transparent 7px, #606060 7px 8px, transparent 8px); background-size: 5px 10px; background-position: right 9px center, right 4px center; background-repeat: no-repeat; }
.ptabs { display: flex; align-items: flex-end; height: 23px; flex: none; }
.ptabs button { width: 56px; height: 19px; border: 1px solid #dcdcdc; border-bottom: 0; }
.ptabs .cur { width: 63px; height: 21px; background: #fff; }
.page { flex: 1; min-height: 0; background: #fff; padding: 4px 3px 0; }
.dtree { height: 100%; display: flex; border: 1px solid #828790; border-bottom: 0; overflow: hidden; }
.dtree .tree { flex: 1; min-width: 0; padding-left: 3px; }
.dtree .vscroll { margin-right: 2px; }
.dright { flex: 1; min-width: 0; border: 1px solid #a0a0a0; border-width: 1px 1px 0; padding-top: 1px; background: #fff; }

/* overlays */
.badge { position: absolute; left: 380px; top: -27px; width: 44px; height: 44px; border-radius: 50%; background: linear-gradient(#35b351, #56d26c); border: 1px solid #2d9446; box-shadow: 0 0 5px 2px rgba(120, 120, 120, 0.5); color: #fff; font-weight: 700; text-align: center; padding-top: 26px; }
.marks { position: absolute; left: 0; top: 0; width: 1366px; height: 768px; pointer-events: none; }
```
